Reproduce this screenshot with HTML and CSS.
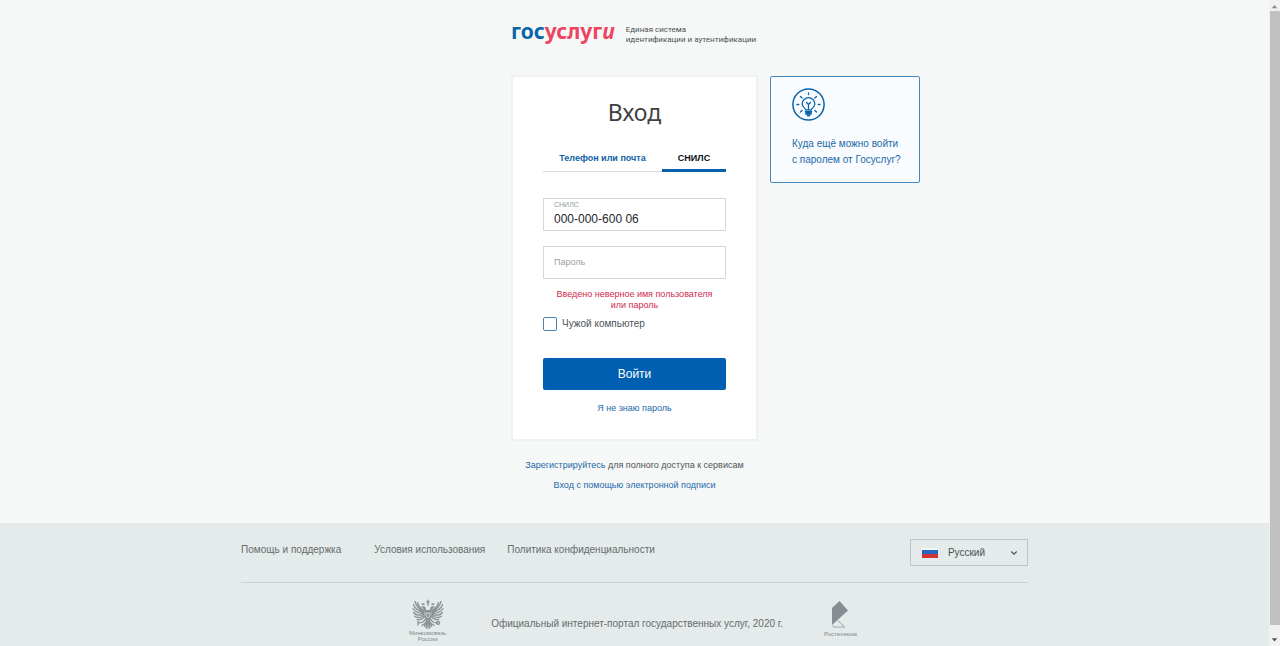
FILE: index.html
```html
<!DOCTYPE html>
<html lang="ru">
<head>
<meta charset="utf-8">
<title>Вход — Госуслуги</title>
<link rel="stylesheet" href="styles.css">
</head>
<body>
<div class="page">
  <main class="main">
    <header class="header">
      <a class="logo" href="#"><span class="logo-blue">гос</span><span class="logo-red">услуг<i>и</i></span></a>
      <p class="tagline">Единая система<br>идентификации и аутентификации</p>
    </header>
    <form class="card">
      <h1 class="title">Вход</h1>
      <nav class="tabs">
        <a class="tab" href="#">Телефон или почта</a>
        <a class="tab tab-active" href="#">СНИЛС</a>
      </nav>
      <div class="field">
        <label class="field-label" for="snils">СНИЛС</label>
        <input class="field-input" id="snils" type="text" value="000-000-600 06">
      </div>
      <div class="field">
        <input class="field-input field-password" type="password" placeholder="Пароль" aria-label="Пароль">
      </div>
      <p class="error">Введено неверное имя пользователя или пароль</p>
      <label class="check"><input class="check-box" type="checkbox">Чужой компьютер</label>
      <button class="submit" type="submit">Войти</button>
      <a class="forgot" href="#">Я не знаю пароль</a>
    </form>
    <a class="tip" href="#">
      <svg class="tip-icon" viewBox="0 0 33 33" fill="none" stroke="#0b63a8" stroke-width="1.3" stroke-linecap="round">
        <circle cx="16.5" cy="16.5" r="15.6" stroke-width="1.5"/>
        <path d="M13.6 21.8c0-1.800-3.400-2.400-3.400-5.900a6.300 6.300 0 0 1 12.600 0c0 3.500-3.400 4.100-3.400 5.900z"/>
        <path d="M16.500 21v-4.500l-2-2M16.500 16.500l2-2"/>
        <path d="M13.700 23.800h5.600M14 25.700h5" stroke-width="1.900"/>
        <path d="M15.500 27.600h2" stroke-width="1.600"/>
        <path d="M16.500 4.800v1.800M8.500 8.500l1.600 1.500M24.500 8.500l-1.600 1.500M5 16.500h1.800M26.200 16.500h1.800M8.500 24l1.600-1.500M24.500 24l-1.600-1.500"/>
      </svg>
      <span>Куда ещё можно войти<br>с паролем от Госуслуг?</span>
    </a>
    <div class="extra">
      <p><a href="#">Зарегистрируйтесь</a> для полного доступа к сервисам</p>
      <p><a href="#">Вход с помощью электронной подписи</a></p>
    </div>
  </main>
  <footer class="footer">
    <div class="footer-inner">
      <div class="footer-top">
        <nav class="footer-links">
          <a href="#">Помощь и поддержка</a>
          <a href="#">Условия использования</a>
          <a href="#">Политика конфиденциальности</a>
        </nav>
        <div class="lang">
          <svg class="flag" viewBox="0 0 16 10"><path fill="#f4f6f8" d="M0 0h16v3H0z"/><path fill="#2467c4" d="M0 2h16v5H0z"/><path fill="#cf3338" d="M0 6h16v4H0z"/></svg>
          <select class="lang-select" aria-label="Язык"><option>Русский</option></select>
          <svg class="chevron" viewBox="0 0 8 6" fill="none" stroke="#4c5355" stroke-width="1.200"><path d="M1.300 1.500L4 4.200l2.700-2.700"/></svg>
        </div>
      </div>
      <div class="footer-bottom">
        <div class="partner">
          <svg class="eagle" viewBox="0 0 32 32" fill="#8b9194" stroke="#8b9194" stroke-linecap="round">
            <path stroke="none" d="M14.500 2.500l.7.700.5-1.700h.6l.5 1.700.7-.7-.3 2.500h-2.400zM9.500 5l.8.700.8-1 .8 1 .8-.7-.3 2h-2.600zM19.300 5l.8.700.8-1 .8 1 .8-.7-.3 2h-2.600z"/>
            <path d="M12.800 8.500c-1.600-1.200-3.200-.5-4 1l1.900-.1c0 1.700 1.900 2 2.200 4l3.100 2 3.100-2c.3-2 2.200-2.300 2.200-4l1.900.1c-.8-1.500-2.400-2.200-4-1-.9.800-1 2.200-1.200 3.500h-4c-.2-1.300-.3-2.700-1.200-3.500z" stroke="none"/>
            <g fill="none" stroke-width="1.300">
              <path d="M12 14C8 12 4.500 9 3 3.500M12 14.500C7 13.500 3 11 1.500 6.500M12 15.500C7 15.500 3 14 1 10.500M12 16.500C8 17.500 3.500 17 1.500 14.500M12.500 17.500C9 19.500 5 20 2.800 18.200M13 18.500C10 21.500 7.500 22.200 5.200 21.300M12.500 13C9 11 6.500 8 5.500 4.500"/>
              <path d="M20 14c4-2 7.500-5 9-10.500M20 14.500c5-1 9-3.500 10.500-8M20 15.500c5 0 9-1.500 11-5M20 16.500c4 1 8.500.5 10.500-2M19.500 17.500c3.500 2 7.500 2.500 9.700.7M19 18.500c3 3 5.500 3.700 7.800 2.800M19.500 13c3.500-2 6-5 7-8.500"/>
              <path d="M13.500 21c-1.500 3-4 4-7.500 4M6 23v4M18.500 21c1.500 3 4 4 7 4M26 23.300a1.500 1.500 0 1 0 .1 0M16 22v8M14.500 22.500l-2 6M17.500 22.500l2 6M13.500 25l-3.500 2.500M18.500 25l3.500 2.500M14.800 24l-.5 6M17.200 24l.5 6M16 4.500v3"/>
            </g>
            <path stroke="none" d="M12.800 13.500h6.400v6c0 1.700-1.600 2.300-3.200 3.300-1.600-1-3.200-1.600-3.200-3.300z"/>
            <path stroke="#e5ebea" stroke-width=".8" fill="none" d="M14.300 15h3.400v3.500L16 20l-1.700-1.500z"/>
          </svg>
          <span>Минкомсвязь<br>России</span>
        </div>
        <p class="copyright">Официальный интернет-портал государственных услуг, 2020 г.</p>
        <div class="partner">
          <svg class="rostelecom" viewBox="0 0 16 28"><path fill="#878d92" d="M0 7L7.500 0 16 9.500 0 24z"/><path fill="none" stroke="#b3b9bb" stroke-width="1.200" d="M6 19.500l6.500 6.700H2L.5 24.500"/></svg>
          <span>Ростелеком</span>
        </div>
      </div>
    </div>
  </footer>
</div>
<div class="scrollbar" aria-hidden="true">
  <svg class="scroll-arrow" viewBox="0 0 10 10"><path fill="#8a8a8a" d="M2.500 7.500L5 4.500l2.500 3z"/></svg>
  <div class="scroll-thumb"></div>
  <svg class="scroll-arrow" viewBox="0 0 10 10"><path fill="#505050" d="M2.500 3L5 6l2.500-3z"/></svg>
</div>
</body>
</html>
```
FILE: styles.css
```css
* { box-sizing: border-box; }
body {
  margin: 0;
  display: flex;
  min-height: 100vh;
  background: #f6f8f8;
  color: #4c5355;
  font: 10px/16px "Liberation Sans", Arial, sans-serif;
}
p, h1 { margin: 0; }
a { color: #2468a9; text-decoration: none; }
input, select, button { font-family: inherit; }

.page { flex: 1; display: flex; flex-direction: column; }
.main {
  flex: 1;
  display: grid;
  grid-template-columns: 1fr 247px 1fr;
  grid-template-rows: auto auto 1fr;
  padding-top: 20px;
}
.header {
  grid-column: 2 / 4;
  display: flex;
  align-items: flex-start;
  gap: 11px;
  height: 28px;
  margin-bottom: 27px;
}
.logo { font: bold 21px/22px "Noto Sans", "Open Sans", sans-serif; }
.logo-blue { color: #0a65a8; }
.logo-red { color: #ec4561; }
.tagline { padding-top: 5px; font: 8px/10px Roboto, "Noto Sans", sans-serif; }

.card {
  grid-column: 2;
  display: flex;
  flex-direction: column;
  padding: 20px 30px 23px;
  background: #fff;
  border: 2px solid #eef1f1;
}
.title {
  font: 23px/30px "Noto Sans", "Open Sans", sans-serif;
  text-align: center;
  color: #3d4244;
}
.tabs {
  display: flex;
  margin-top: 23px;
  border-bottom: 1px solid #d3dbe2;
  font-size: 9px;
  font-weight: bold;
}
.tab { flex: 1; padding-bottom: 5px; text-align: center; line-height: 16px; color: #0f5fa8; }
.tab-active {
  flex: 0 0 64px;
  margin-bottom: -1px;
  padding-bottom: 3px;
  border-bottom: 3px solid #0b60ae;
  color: #0b0f12;
}
.field {
  display: flex;
  flex-direction: column;
  height: 33px;
  margin-top: 15px;
  padding: 0 10px;
  border: 1px solid #d5d8da;
}
.tabs + .field { margin-top: 26px; }
.field-label { font-size: 7px; line-height: 11px; color: #94999b; }
.field-input {
  flex: 1;
  width: 100%;
  min-height: 0;
  padding: 0 0 2px;
  border: 0;
  outline: 0;
  background: none;
  font-size: 12px;
  color: #23282b;
}
.field-password { font-size: 9px; }
.field-input::placeholder { color: #9b9fa1; }
.error {
  margin-top: 10px;
  padding: 0 12px;
  font-size: 9px;
  line-height: 11px;
  text-align: center;
  color: #d02a4d;
}
.check { display: flex; align-items: center; gap: 5px; margin-top: 5px; }
.check-box {
  appearance: none;
  width: 14px;
  height: 14px;
  margin: 0;
  border: 1px solid #4a82b4;
  border-radius: 2px;
  background: #fff;
}
.submit {
  height: 32px;
  margin-top: 26px;
  padding: 0;
  border: 0;
  border-radius: 2px;
  background: #005fb0;
  color: #fff;
  font-size: 12px;
}
.forgot { margin-top: 10px; text-align: center; font-size: 9px; }

.tip {
  grid-column: 3;
  justify-self: start;
  align-self: start;
  display: flex;
  flex-direction: column;
  gap: 15px;
  width: 150px;
  margin: 1px 0 0 12px;
  padding: 11px 0 14px 21px;
  border: 1px solid #4389bf;
  border-radius: 2px;
  background: #f9fcfe;
}
.tip-icon { width: 33px; height: 33px; }
.extra {
  grid-column: 1 / 4;
  padding-top: 14px;
  text-align: center;
  font-size: 9px;
  line-height: 20px;
}

.footer { padding: 16px 0 4px; background: #e5ebea; color: #666c6e; }
.footer a { color: inherit; }
.footer-inner { width: 62%; max-width: 1180px; margin: 0 auto; }
.footer-top {
  display: flex;
  justify-content: space-between;
  padding-bottom: 16px;
  border-bottom: 1px solid #cbd2d3;
}
.footer-links { display: flex; padding-top: 3px; }
.footer-links a { margin-right: 22px; }
.footer-links a:first-child { margin-right: 33px; }
.lang {
  display: flex;
  align-items: center;
  width: 118px;
  height: 27px;
  padding: 0 9px 0 11px;
  border: 1px solid #bdc6c7;
}
.flag { width: 16px; height: 10px; }
.lang-select {
  appearance: none;
  flex: 1;
  min-width: 0;
  padding: 0 0 0 10px;
  border: 0;
  background: none;
  color: #4c5355;
  font-size: 10px;
}
.chevron { width: 8px; height: 6px; }
.footer-bottom { display: flex; justify-content: center; padding-top: 15px; }
.partner {
  display: flex;
  flex-direction: column;
  align-items: center;
  font-size: 6px;
  line-height: 6px;
  text-align: center;
  color: #81888b;
}
.partner:first-child { margin-right: 45px; }
.partner:last-child { margin-left: 41px; padding-right: 3px; }
.eagle { width: 32px; height: 32px; }
.rostelecom { width: 16px; height: 28px; margin: 3px 0 2px; }
.copyright { padding-top: 18px; }

.scrollbar { flex: 0 0 11px; display: flex; flex-direction: column; background: #f1f1f1; }
.scroll-arrow { width: 11px; height: 11px; }
.scroll-arrow:last-child { margin-top: 10px; }
.scroll-thumb { flex: 1; margin-left: 1px; background: #c1c1c1; }
```
